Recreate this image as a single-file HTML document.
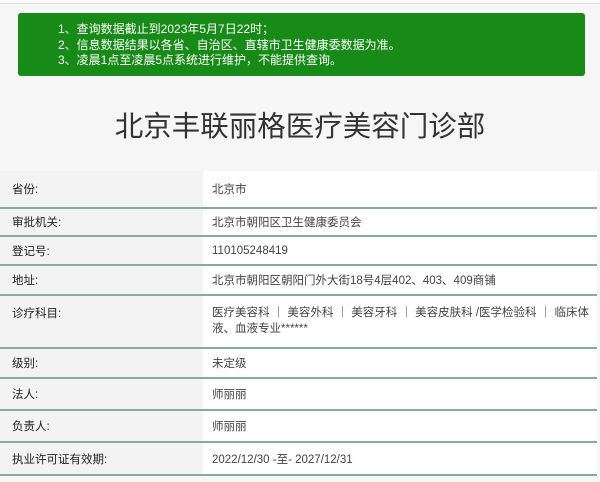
<!DOCTYPE html>
<html><head><meta charset="utf-8"><style>
*{margin:0;padding:0;box-sizing:border-box}
body{width:600px;height:482px;background:#f6f6f6;font-family:"Liberation Sans","Noto Sans CJK SC",sans-serif;position:relative;overflow:hidden;color:#333}
.top{position:absolute;left:0;top:0;width:600px;height:4px;border-bottom:1px solid #e2e2e2;background:#fafafa}
.notice{position:absolute;left:18px;top:13px;width:567px;height:63px;background:#178a17;border-radius:3px;color:#fff;font-size:12px;line-height:15.5px;padding:9px 0 0 40px}
h1{position:absolute;left:0;top:107px;width:600px;text-align:center;font-size:28.5px;font-weight:normal;color:#333;line-height:40px}
.hr{position:absolute;left:16px;top:177px;width:568px;height:1px;background:#e6e6e6}
.row{position:absolute;left:0;width:597px;border-bottom:2px solid #86aa9c;font-size:11.5px}
.row .l{position:absolute;left:0;top:0;bottom:0;width:203px;background:#f3f3f3;padding-left:12px;color:#222}
.row .v{position:absolute;left:203px;top:0;bottom:0;right:0;background:#fff;padding-left:9px;padding-right:6px;color:#444}
.row div{display:flex;align-items:center}
.row .v.t{align-items:flex-start;padding-top:9px;line-height:16px}
.row .l.t{align-items:flex-start;padding-top:9px}
</style></head><body>
<div class="top"></div>
<div class="notice">1、查询数据截止到2023年5月7日22时；<br>2、信息数据结果以各省、自治区、直辖市卫生健康委数据为准。<br>3、凌晨1点至凌晨5点系统进行维护，不能提供查询。</div>
<h1>北京丰联丽格医疗美容门诊部</h1>
<div class="hr"></div>
<div class="row" style="top:171px;height:38px"><div class="l">省份:</div><div class="v">北京市</div></div>
<div class="row" style="top:209px;height:28px"><div class="l">审批机关:</div><div class="v">北京市朝阳区卫生健康委员会</div></div>
<div class="row" style="top:237px;height:29px"><div class="l">登记号:</div><div class="v">110105248419</div></div>
<div class="row" style="top:266px;height:30px"><div class="l">地址:</div><div class="v">北京市朝阳区朝阳门外大街18号4层402、403、409商铺</div></div>
<div class="row" style="top:296px;height:53px"><div class="l t">诊疗科目:</div><div class="v t">医疗美容科 ｜ 美容外科 ｜ 美容牙科 ｜ 美容皮肤科 /医学检验科 ｜ 临床体液、血液专业******</div></div>
<div class="row" style="top:349px;height:30px"><div class="l">级别:</div><div class="v">未定级</div></div>
<div class="row" style="top:379px;height:32px"><div class="l">法人:</div><div class="v">师丽丽</div></div>
<div class="row" style="top:411px;height:32px"><div class="l">负责人:</div><div class="v">师丽丽</div></div>
<div class="row" style="top:443px;height:33px"><div class="l">执业许可证有效期:</div><div class="v">2022/12/30 -至- 2027/12/31</div></div>
</body></html>
